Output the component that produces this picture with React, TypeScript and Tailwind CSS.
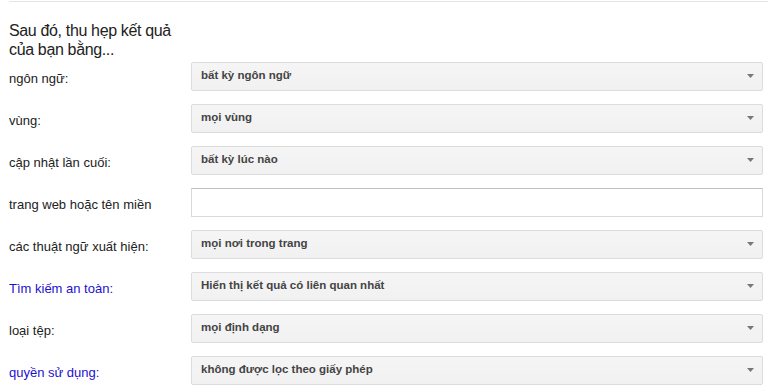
import React from "react";

type Row = { label: string; value?: string; link?: boolean; input?: boolean };

const rows: Row[] = [
  { label: "ngôn ngữ:", value: "bất kỳ ngôn ngữ" },
  { label: "vùng:", value: "mọi vùng" },
  { label: "cập nhật lần cuối:", value: "bất kỳ lúc nào" },
  { label: "trang web hoặc tên miền", input: true },
  { label: "các thuật ngữ xuất hiện:", value: "mọi nơi trong trang" },
  { label: "Tìm kiếm an toàn:", value: "Hiển thị kết quả có liên quan nhất", link: true },
  { label: "loại tệp:", value: "mọi định dạng" },
  { label: "quyền sử dụng:", value: "không được lọc theo giấy phép", link: true },
];

function Arrow() {
  return (
    <svg width="7" height="4" viewBox="0 0 7 4" className="shrink-0">
      <path d="M0 0 H7 L3.5 4 Z" fill="#777" />
    </svg>
  );
}

export default function App() {
  return (
    <div className="w-[768px] h-[387px] overflow-hidden bg-white font-['Liberation_Sans',Arial,sans-serif] text-[#222]">
      <div className="ml-[9px] mt-[1px] h-px bg-[#e5e5e5]" />
      <div className="ml-[9px] mt-[19px] w-[180px] text-[16px] leading-[19px] tracking-[-0.35px] text-[#222]">
        Sau đó, thu hẹp kết quả của bạn bằng...
      </div>
      <div className="mt-[3px] flex flex-col gap-[14px]">
        {rows.map((r) => (
          <div key={r.label} className="flex h-[28px] items-center">
            <div
              className={`w-[191px] shrink-0 pl-[9px] pt-[5px] text-[13px] ${
                r.link ? "text-[#1c0fd0]" : "text-[#222]"
              }`}
            >
              {r.label}
            </div>
            {r.input ? (
              <div className="h-[29px] w-[572px] border border-[#d9d9d9] border-t-[#c0c0c0] bg-white" />
            ) : (
              <div className="flex h-[29px] w-[572px] items-center justify-between rounded-[2px] border border-[#dcdcdc] bg-gradient-to-b from-[#f5f5f5] to-[#f1f1f1] pl-[9px] pr-[8px]">
                <span className="text-[11.5px] font-bold text-[#444]">{r.value}</span>
                <Arrow />
              </div>
            )}
          </div>
        ))}
      </div>
    </div>
  );
}
